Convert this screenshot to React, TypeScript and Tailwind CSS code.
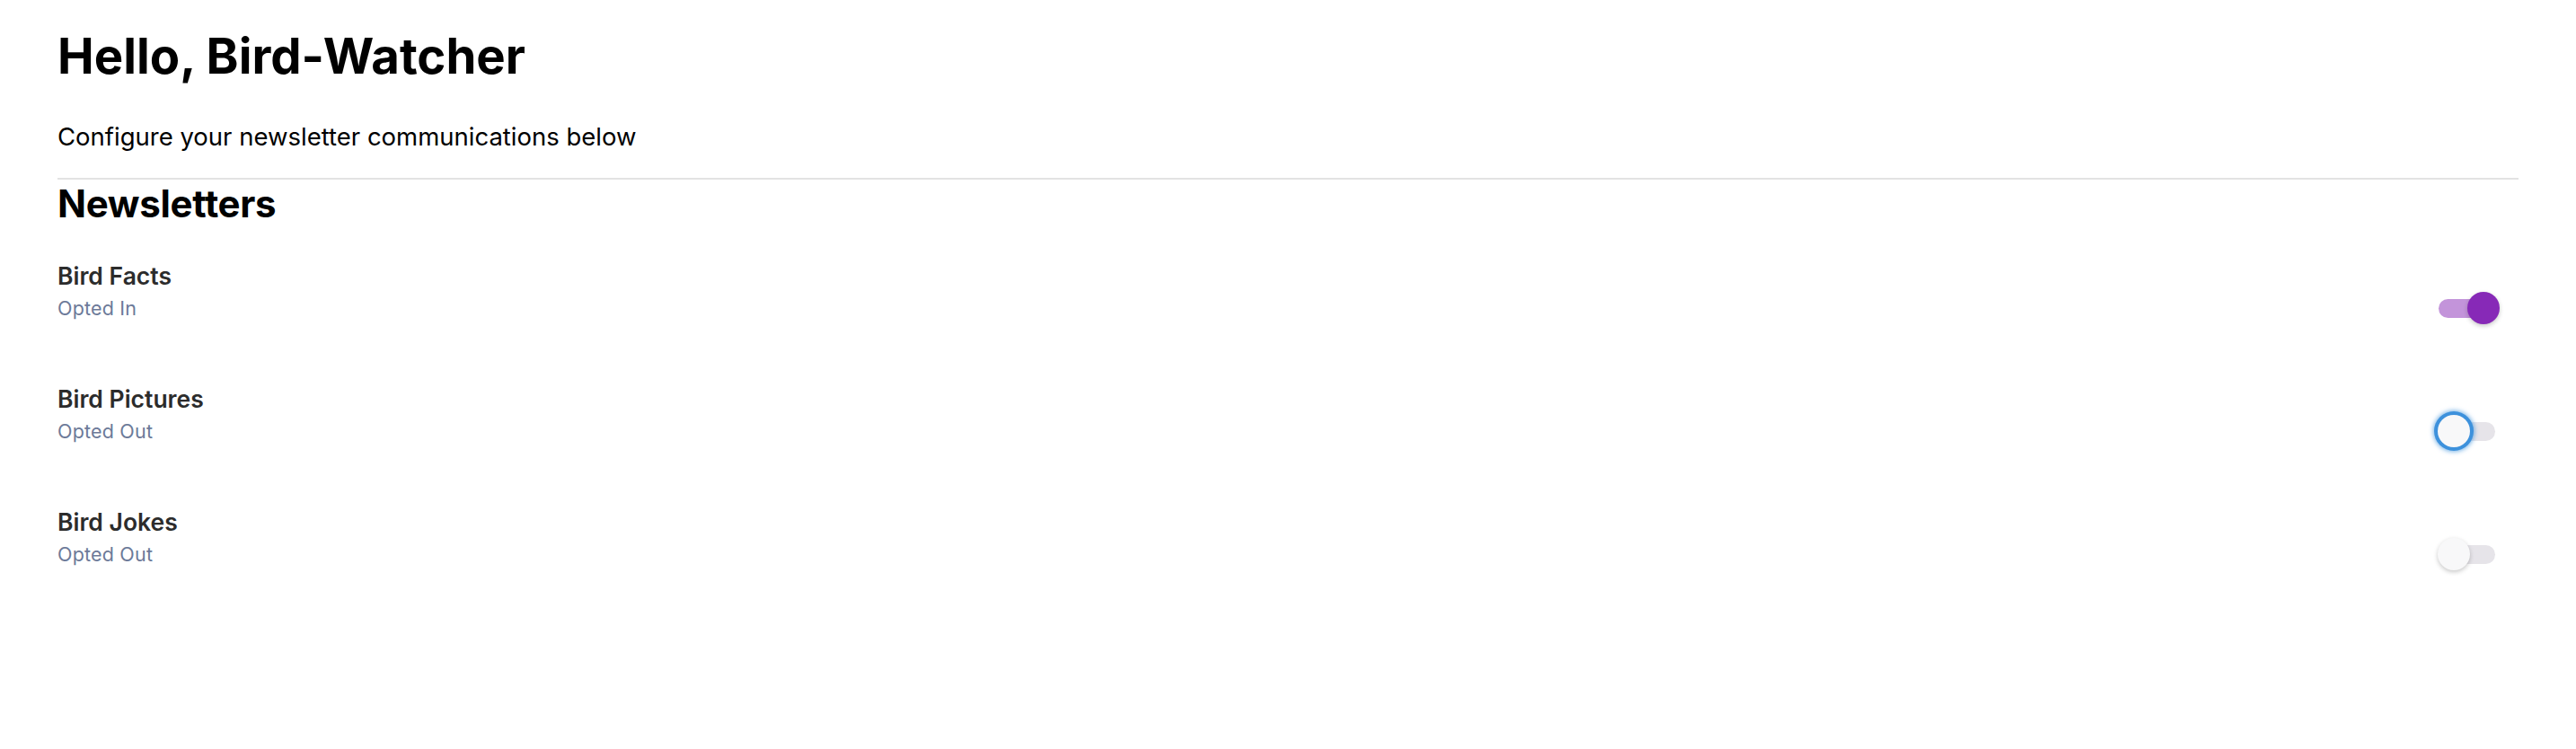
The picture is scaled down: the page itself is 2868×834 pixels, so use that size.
import React from 'react';

type Newsletter = { name: string; on: boolean; focused?: boolean };

const newsletters: Newsletter[] = [
  { name: 'Bird Facts', on: true },
  { name: 'Bird Pictures', on: false, focused: true },
  { name: 'Bird Jokes', on: false },
];

const Toggle: React.FC<{ on: boolean; focused?: boolean }> = ({ on, focused }) => {
  const thumb = on
    ? 'w-[36px] h-[36px] rounded-full bg-[#8729b7] shadow-[0_2px_5px_rgba(0,0,0,0.22)]'
    : focused
      ? 'w-[36px] h-[36px] rounded-full bg-[#f8f8f9] shadow-[0_0_0_4px_#3d91dc,0_0_5px_5px_rgba(61,145,220,0.7)]'
      : 'w-[36px] h-[36px] rounded-full bg-[#f8f8f9] shadow-[0_2px_5px_rgba(0,0,0,0.22)]';
  return (
    <div className={on ? 'relative flex w-[70px] h-[36px] items-center justify-end' : 'relative flex w-[70px] h-[36px] items-center justify-start pl-[1px]'}>
      {/* track sits under the thumb */}
      <div className={on ? 'absolute left-[2px] w-[63px] h-[21px] rounded-full bg-[#c394da]' : 'absolute left-[2px] w-[63px] h-[21px] rounded-full bg-[#e6e4e9]'} />
      <div className={'relative ' + thumb} />
    </div>
  );
};

export default function App() {
  return (
    <div className="min-h-screen bg-white px-[64px] pt-[36px] font-['Inter',sans-serif] text-black">
      {/* Header */}
      <div className="flex flex-col gap-[50px]">
        <h1 className="text-[54.5px] leading-[52px] font-bold">Hello, Bird-Watcher</h1>
        <p className="text-[27.5px] leading-[28px]">Configure your newsletter communications below</p>
      </div>
      <hr className="mt-[32px] border-t-[2px] border-[#e3e3e3]" />

      {/* Newsletters */}
      <h2 className="mt-[5px] text-[42px] leading-[43px] font-bold tracking-[-0.3px]">Newsletters</h2>
      <div className="flex flex-col mt-[47px]">
        {newsletters.map((n) => (
          <div key={n.name} className="flex justify-between items-start h-[137px] pr-[21px]">
            <div className="flex flex-col gap-[14px]">
              <div className="text-[26.5px] leading-[24px] font-semibold text-[#2c2c2c]">{n.name}</div>
              <div className="text-[21.5px] leading-[20px] tracking-[0.2px] text-[#6c7a99]">
                {n.on ? 'Opted In' : 'Opted Out'}
              </div>
            </div>
            <div className="pt-[30px]">
              <Toggle on={n.on} focused={n.focused} />
            </div>
          </div>
        ))}
      </div>
    </div>
  );
}
